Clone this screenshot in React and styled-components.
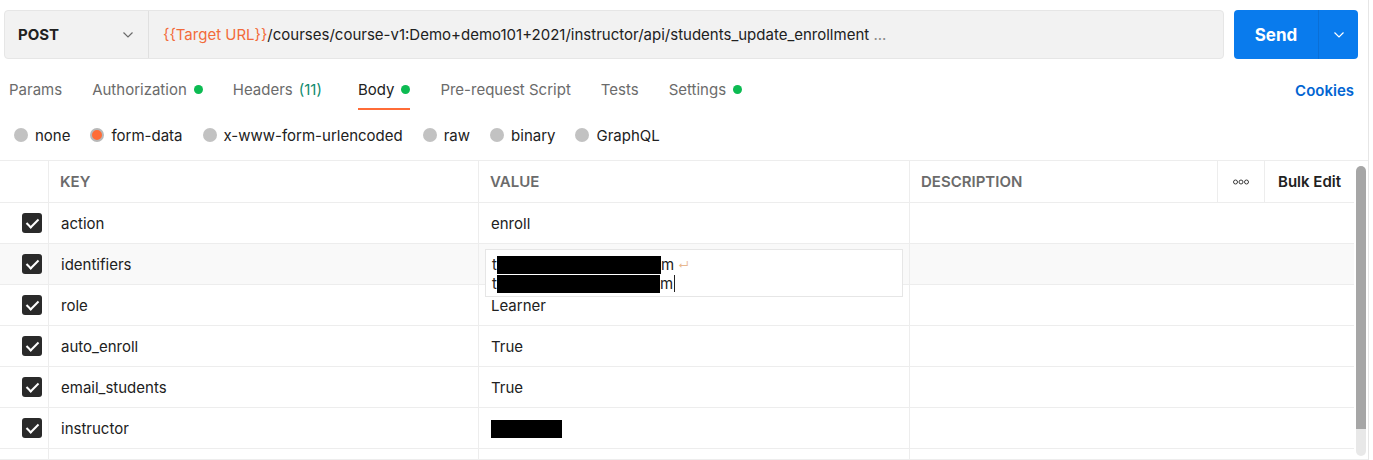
import React from "react";
import styled, { createGlobalStyle } from "styled-components";

const GlobalStyle = createGlobalStyle`
  html, body {
    margin: 0;
    padding: 0;
    background: #ffffff;
    overflow: hidden;
  }
  body {
    font-family: Inter, "Noto Sans", "Liberation Sans", sans-serif;
    font-size: 15px;
    color: #212121;
  }
`;

const tabs = [
  { label: "Params" },
  { label: "Authorization", dot: true },
  { label: "Headers", count: "(11)" },
  { label: "Body", dot: true, active: true },
  { label: "Pre-request Script" },
  { label: "Tests" },
  { label: "Settings", dot: true },
];

const bodyTypes = [
  { label: "none" },
  { label: "form-data", selected: true },
  { label: "x-www-form-urlencoded" },
  { label: "raw" },
  { label: "binary" },
  { label: "GraphQL" },
];

const rows = [
  { key: "action", value: "enroll" },
  { key: "identifiers", multi: true, hover: true },
  { key: "role", value: "Learner" },
  { key: "auto_enroll", value: "True" },
  { key: "email_students", value: "True" },
  { key: "instructor", redacted: 71 },
  { empty: true },
];

export default function App() {
  return (
    <Page>
      <GlobalStyle />
      <TopBar>
        <UrlGroup>
          <MethodSelect>
            <MethodLabel>POST</MethodLabel>
            <Chevron color="#6b6b6b" />
          </MethodSelect>
          <UrlText>
            <VarText>{"{{Target URL}}"}</VarText>
            /courses/course-v1:Demo+demo101+2021/instructor/api/students_update_enrollment
            <Dots> ...</Dots>
          </UrlText>
        </UrlGroup>
        <SendGroup>
          <SendButton>Send</SendButton>
          <SendArrow>
            <Chevron color="#ffffff" />
          </SendArrow>
        </SendGroup>
      </TopBar>

      <TabsRow>
        <TabList>
          {tabs.map((tab) => (
            <Tab key={tab.label} active={tab.active} extra={tab.count ? 6 : 0}>
              {tab.label}
              {tab.count && <Count>{tab.count}</Count>}
              {tab.dot && <GreenDot />}
            </Tab>
          ))}
        </TabList>
        <CookiesLink>Cookies</CookiesLink>
      </TabsRow>

      <RadioRow>
        {bodyTypes.map((item) => (
          <RadioItem key={item.label}>
            <Radio selected={item.selected} />
            {item.label}
          </RadioItem>
        ))}
      </RadioRow>

      <TableWrap>
        <TableBody>
          <HeaderRow>
            <CheckCell />
            <HeadCell width={430}>KEY</HeadCell>
            <HeadCell width={431}>VALUE</HeadCell>
            <HeadCell width={308}>DESCRIPTION</HeadCell>
            <IconCell>
              <svg width="16" height="6" viewBox="0 0 16 6">
                <circle cx="2.5" cy="3" r="2" fill="none" stroke="#3a3a3a" strokeWidth="1" />
                <circle cx="8" cy="3" r="2" fill="none" stroke="#3a3a3a" strokeWidth="1" />
                <circle cx="13.5" cy="3" r="2" fill="none" stroke="#3a3a3a" strokeWidth="1" />
              </svg>
            </IconCell>
            <BulkCell>Bulk Edit</BulkCell>
          </HeaderRow>
          {rows.map((row, i) => (
            <Row key={i} hover={row.hover}>
              <CheckCell>{!row.empty && <Checkbox />}</CheckCell>
              <Cell width={430}>{row.key}</Cell>
              <Cell width={431} overflow={row.multi}>
                {row.value}
                {row.redacted && <Redact style={{ width: row.redacted }} />}
                {row.multi && (
                  <Editor>
                    <EditorLine>
                      t<Redact style={{ width: 164 }} />m<ReturnMark>↵</ReturnMark>
                    </EditorLine>
                    <EditorLine>
                      t<Redact style={{ width: 163 }} />m<Caret />
                    </EditorLine>
                  </Editor>
                )}
              </Cell>
              <PlainCell />
            </Row>
          ))}
        </TableBody>
        <ScrollTrack>
          <ScrollThumb />
        </ScrollTrack>
      </TableWrap>
    </Page>
  );
}

function Chevron({ color }) {
  return (
    <svg width="12" height="8" viewBox="0 0 12 8">
      <path d="M1.5 1.5 L6 6 L10.5 1.5" fill="none" stroke={color} strokeWidth="1.2" />
    </svg>
  );
}

const Page = styled.div`
  width: 1368px;
  height: 460px;
  border-right: 1px solid #e6e6e6;
  overflow: hidden;
`;

const TopBar = styled.div`
  display: flex;
  gap: 10px;
  padding: 10px 10px 0 4px;
`;

const UrlGroup = styled.div`
  flex: 1;
  display: flex;
  height: 49px;
  box-sizing: border-box;
  background: #f2f2f2;
  border: 1px solid #e6e6e6;
  border-radius: 4px;
`;

const MethodSelect = styled.div`
  width: 144px;
  box-sizing: border-box;
  display: flex;
  align-items: center;
  justify-content: space-between;
  padding: 0 14px 0 13px;
  border-right: 1px solid #e0e0e0;
`;

const MethodLabel = styled.span`
  font-weight: 700;
  font-size: 15px;
  color: #212121;
`;

const UrlText = styled.div`
  display: flex;
  align-items: center;
  padding-left: 14px;
  font-size: 15px;
  color: #212121;
  white-space: pre;
`;

const VarText = styled.span`
  color: #f26b3a;
`;

const Dots = styled.span`
  color: #8a8a8a;
`;

const SendGroup = styled.div`
  display: flex;
  height: 49px;
  background: #097bed;
  border-radius: 4px;
  overflow: hidden;
`;

const SendButton = styled.div`
  width: 84px;
  display: flex;
  align-items: center;
  justify-content: center;
  color: #ffffff;
  font-weight: 700;
  font-size: 17px;
  border-right: 1px solid #0a6fd6;
`;

const SendArrow = styled.div`
  width: 39px;
  display: flex;
  align-items: center;
  justify-content: center;
`;

const TabsRow = styled.div`
  display: flex;
  align-items: center;
  justify-content: space-between;
  height: 40px;
  margin-top: 11px;
  padding: 0 14px 0 9px;
`;

const TabList = styled.div`
  display: flex;
  gap: 30px;
  height: 100%;
`;

const Tab = styled.div`
  display: flex;
  align-items: center;
  height: 100%;
  box-sizing: border-box;
  color: ${(p) => (p.active ? "#212121" : "#6b6b6b")};
  border-bottom: 2px solid ${(p) => (p.active ? "#ff6c37" : "transparent")};
  padding-top: 1px;
  padding-right: ${(p) => p.extra}px;
`;

const Count = styled.span`
  color: #0f8a6e;
  margin-left: 6px;
`;

const GreenDot = styled.span`
  width: 9px;
  height: 9px;
  border-radius: 50%;
  background: #0cbb52;
  margin-left: 7px;
`;

const CookiesLink = styled.span`
  color: #0265d2;
  font-weight: 600;
`;

const RadioRow = styled.div`
  display: flex;
  align-items: center;
  gap: 20px;
  height: 50px;
  padding-left: 14px;
`;

const RadioItem = styled.label`
  display: flex;
  align-items: center;
  gap: 7px;
  color: #212121;
`;

const Radio = styled.span`
  width: 14px;
  height: 14px;
  box-sizing: border-box;
  border-radius: 50%;
  background: ${(p) => (p.selected ? "#ff6c37" : "#c2c2c2")};
  border: ${(p) => (p.selected ? "2px solid #b8b8b8" : "none")};
`;

const TableWrap = styled.div`
  display: flex;
  height: 300px;
  box-sizing: border-box;
  border-top: 1px solid #ededed;
  border-bottom: 1px solid #ededed;
  overflow: hidden;
`;

const TableBody = styled.div`
  width: 1354px;
`;

const HeaderRow = styled.div`
  display: flex;
  height: 42px;
  box-sizing: border-box;
  border-bottom: 1px solid #ededed;
`;

const Row = styled.div`
  display: flex;
  height: 41px;
  box-sizing: border-box;
  border-bottom: 1px solid #ededed;
  background: ${(p) => (p.hover ? "#f9f9f9" : "#ffffff")};
`;

const CheckCell = styled.div`
  width: 49px;
  flex-shrink: 0;
  display: flex;
  align-items: center;
  justify-content: flex-end;
  padding-right: 6px;
  box-sizing: border-box;
  border-right: 1px solid #ededed;
`;

const HeadCell = styled.div`
  width: ${(p) => p.width}px;
  flex-shrink: 0;
  box-sizing: border-box;
  display: flex;
  align-items: center;
  padding-left: 11px;
  border-right: 1px solid #ededed;
  font-weight: 600;
  color: #6b6b6b;
`;

const IconCell = styled.div`
  width: 47px;
  flex-shrink: 0;
  box-sizing: border-box;
  display: flex;
  align-items: center;
  justify-content: center;
  border-right: 1px solid #ededed;
`;

const BulkCell = styled.div`
  flex: 1;
  display: flex;
  align-items: center;
  padding-left: 13px;
  font-weight: 600;
  color: #212121;
`;

const Cell = styled.div`
  position: ${(p) => (p.overflow ? "relative" : "static")};
  width: ${(p) => p.width}px;
  flex-shrink: 0;
  box-sizing: border-box;
  display: flex;
  align-items: center;
  padding-left: 12px;
  padding-top: 1px;
  border-right: 1px solid #ededed;
  color: #212121;
`;

const PlainCell = styled.div`
  flex: 1;
`;

const Checkbox = styled.span`
  width: 20px;
  height: 20px;
  border-radius: 3px;
  background: #2a2a2a;
  position: relative;
  &::after {
    content: "";
    position: absolute;
    left: 7px;
    top: 3px;
    width: 5px;
    height: 10px;
    border: solid #ffffff;
    border-width: 0 2.5px 2.5px 0;
    transform: rotate(45deg);
  }
`;

const Redact = styled.span`
  display: inline-block;
  height: 18px;
  background: #000000;
  vertical-align: middle;
`;

const Editor = styled.div`
  position: absolute;
  left: 6px;
  right: 6px;
  top: 5px;
  height: 48px;
  box-sizing: border-box;
  padding: 5px 0 0 6px;
  background: #ffffff;
  border: 1px solid #e6e6e6;
  z-index: 2;
`;

const EditorLine = styled.div`
  display: flex;
  align-items: center;
  height: 19px;
  color: #212121;
`;

const ReturnMark = styled.span`
  color: #e8b890;
  font-size: 11px;
  margin-left: 4px;
`;

const Caret = styled.span`
  width: 1px;
  height: 17px;
  background: #212121;
  margin-left: 1px;
`;

const ScrollTrack = styled.div`
  width: 14px;
  display: flex;
  justify-content: center;
  padding-top: 5px;
`;

const ScrollThumb = styled.div`
  width: 10px;
  height: 290px;
  border-radius: 5px;
  background: linear-gradient(#a6a6a6 0, #a6a6a6 263px, #e8e8e8 263px);
`;
